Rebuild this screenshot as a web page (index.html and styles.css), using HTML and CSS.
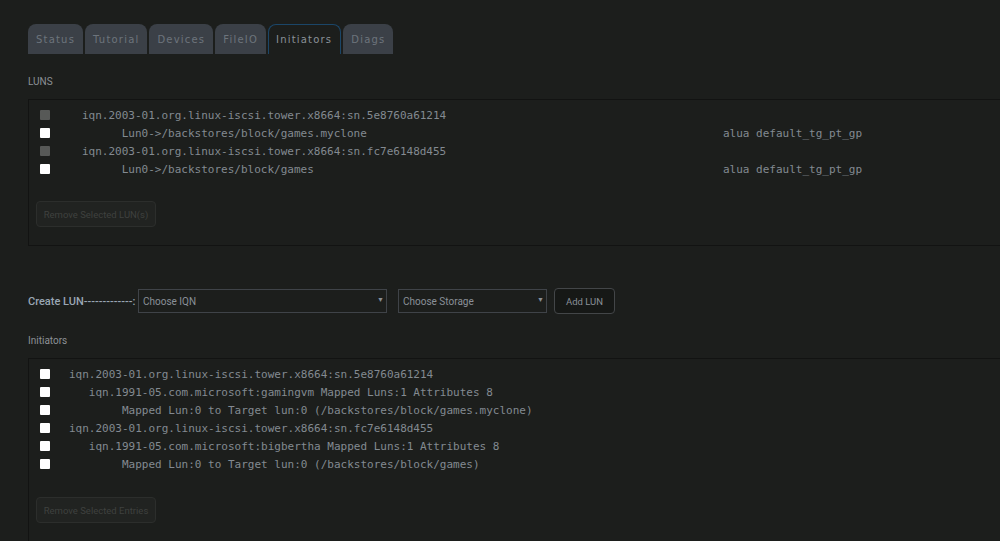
FILE: index.html
```html
<!DOCTYPE html>
<html>
<head>
	<title>iSCSI - Initiators</title>
	<meta name="viewport" content="width=device-width">
	<link rel="stylesheet" href="styles.css">
</head>
<body>
	<div class="page">
		<nav class="tabs">
			<span class="tab">Status</span>
			<span class="tab">Tutorial</span>
			<span class="tab">Devices</span>
			<span class="tab">FileIO</span>
			<span class="tab active">Initiators</span>
			<span class="tab">Diags</span>
		</nav>

		<div class="title">LUNS</div>
		<div class="panel">
			<div class="rows luns">
				<div class="row"><input type="checkbox" disabled><span class="txt">iqn.2003-01.org.linux-iscsi.tower.x8664:sn.5e8760a61214</span></div>
				<div class="row"><input type="checkbox"><span class="txt">      Lun0-&gt;/backstores/block/games.myclone</span><span class="alua">alua default_tg_pt_gp</span></div>
				<div class="row"><input type="checkbox" disabled><span class="txt">iqn.2003-01.org.linux-iscsi.tower.x8664:sn.fc7e6148d455</span></div>
				<div class="row"><input type="checkbox"><span class="txt">      Lun0-&gt;/backstores/block/games</span><span class="alua">alua default_tg_pt_gp</span></div>
			</div>
			<button class="btn-off" disabled>Remove Selected LUN(s)</button>
		</div>

		<div class="create">
			<span class="create-label">Create LUN-------------:</span>
			<div class="sel iqn"><select><option>Choose IQN</option></select></div>
			<div class="sel storage"><select><option>Choose Storage</option></select></div>
			<button class="btn">Add LUN</button>
		</div>

		<div class="title">Initiators</div>
		<div class="panel">
			<div class="rows inits">
				<div class="row"><input type="checkbox"><span class="txt">iqn.2003-01.org.linux-iscsi.tower.x8664:sn.5e8760a61214</span></div>
				<div class="row"><input type="checkbox"><span class="txt">   iqn.1991-05.com.microsoft:gamingvm Mapped Luns:1 Attributes 8</span></div>
				<div class="row"><input type="checkbox"><span class="txt">        Mapped Lun:0 to Target lun:0 (/backstores/block/games.myclone)</span></div>
				<div class="row"><input type="checkbox"><span class="txt">iqn.2003-01.org.linux-iscsi.tower.x8664:sn.fc7e6148d455</span></div>
				<div class="row"><input type="checkbox"><span class="txt">   iqn.1991-05.com.microsoft:bigbertha Mapped Luns:1 Attributes 8</span></div>
				<div class="row"><input type="checkbox"><span class="txt">        Mapped Lun:0 to Target lun:0 (/backstores/block/games)</span></div>
			</div>
			<button class="btn-off" disabled>Remove Selected Entries</button>
		</div>
	</div>
</body>
</html>
```

FILE: styles.css
```css
body{
	margin: 0;
	background: #1c1e1c;
	color: #8c9196;
	font-family: Roboto, "Liberation Sans", sans-serif;
	overflow: hidden;
}

.page{
	padding: 24px 0 0 28px;
	width: 1000px;
}

/* tabs */
.tabs{
	display: flex;
	gap: 2px;
	height: 30px;
}
.tab{
	box-sizing: border-box;
	height: 30px;
	line-height: 31px;
	padding: 0 8px;
	background: #3b4047;
	color: #6d747c;
	font-family: "DejaVu Sans", sans-serif;
	font-size: 10px;
	letter-spacing: 1.2px;
	border-radius: 8px 8px 0 0;
}
.tab.active{
	background: #1c1e1c;
	color: #8a9198;
	border: 1px solid #1b4668;
	border-bottom: none;
	line-height: 30px;
	padding: 0 8px 0 7px;
}

.title{
	font-size: 10px;
	margin: 22px 0 11px;
	line-height: 12px;
}

/* panels */
.panel{
	border: 1px solid #121312;
	padding: 6px 0 18px 11px;
}
.rows .row{
	display: flex;
	align-items: center;
	height: 18px;
}
.row input[type="checkbox"]{
	appearance: none;
	-webkit-appearance: none;
	width: 10px;
	height: 10px;
	margin: 0;
	background: #ffffff;
	border-radius: 1px;
}
.row input[type="checkbox"]:disabled{
	background: #575957;
}
.txt, .alua{
	font-family: "DejaVu Sans Mono", monospace;
	font-size: 11px;
	white-space: pre;
	color: #838a91;
}
.luns .txt{
	margin-left: 32px;
	width: 641px;
}
.inits .txt{
	margin-left: 19px;
}

.btn-off{
	display: block;
	margin-top: 23px;
	width: 120px;
	height: 26px;
	background: #212321;
	border: 1px solid #2c2e2c;
	border-radius: 4px;
	color: #3f413f;
	font-family: Roboto, sans-serif;
	font-size: 9.5px;
	padding: 0;
	margin-left: -4px;
}

/* create LUN */
.create{
	display: flex;
	align-items: center;
	margin-top: 42px;
	height: 26px;
}
.create-label{
	font-size: 11px;
	font-weight: 500;
	color: #9aa6b4;
	width: 110px;
	white-space: nowrap;
}
.sel{
	position: relative;
	height: 24px;
}
.sel select{
	appearance: none;
	-webkit-appearance: none;
	box-sizing: border-box;
	height: 24px;
	background: #1c1e1c;
	border: 1px solid #3f4348;
	color: #8a9098;
	font-family: Roboto, sans-serif;
	font-size: 10px;
	padding: 0 4px;
	border-radius: 0;
	outline: none;
}
.sel::after{
	content: "\25BC";
	position: absolute;
	right: 3px;
	top: 7px;
	font-size: 7px;
	color: #8a9098;
	pointer-events: none;
}
.sel.iqn select{
	width: 249px;
}
.sel.storage{
	margin-left: 11px;
}
.sel.storage select{
	width: 149px;
}
.btn{
	margin-left: 7px;
	width: 61px;
	height: 26px;
	background: #161816;
	border: 1px solid #434648;
	border-radius: 4px;
	color: #8a9098;
	font-family: Roboto, sans-serif;
	font-size: 9.5px;
	padding: 0;
}

.create + .title{
	margin-top: 21px;
}
.inits + .btn-off{
	margin-top: 24px;
}
```
